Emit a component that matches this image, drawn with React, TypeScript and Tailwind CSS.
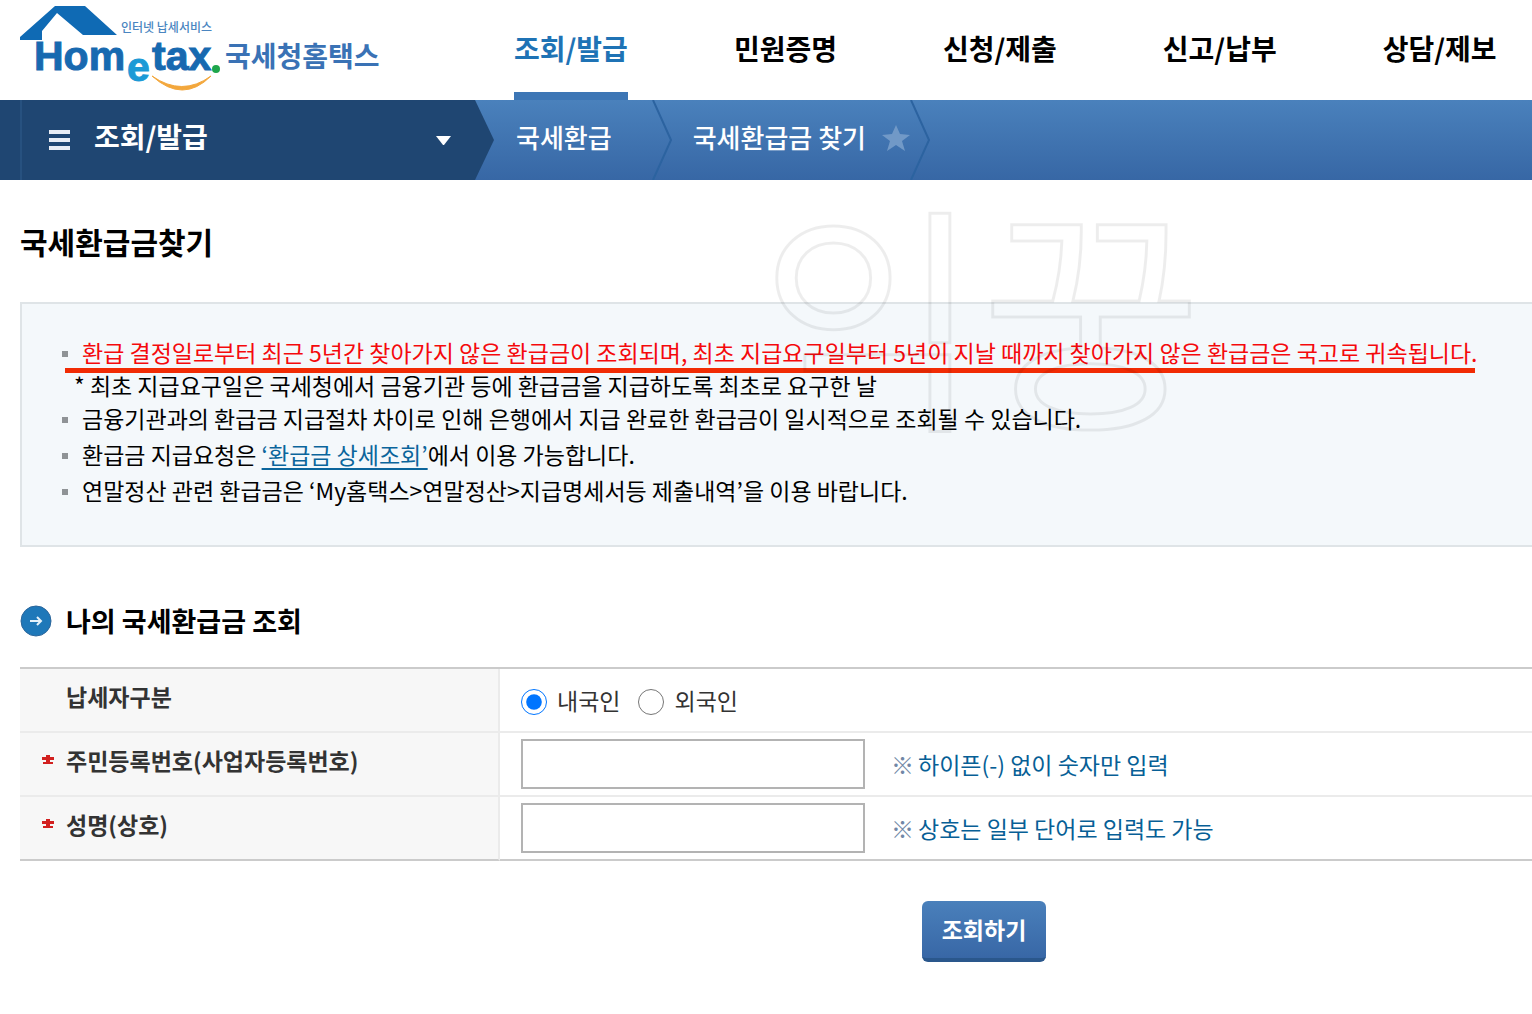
import { useState } from "react"

const MENUS = ["조회/발급", "민원증명", "신청/제출", "신고/납부", "상담/제보"]

const Logo = () => (
  <svg width="360" height="94" viewBox="20 0 360 94" role="img" aria-label="Hometax 국세청홈택스">
    <path d="M55 6H85L117 35H83L57 13L42 31V40H20V37Z" fill="#0f6ab4" />
    <g fontFamily="'Liberation Sans', sans-serif" fontWeight="700" fontSize="41" fill="#1769b0" stroke="#1769b0">
      <text x="34" y="70">Hom</text>
      <text x="152" y="70">tax</text>
      <text x="127" y="81" fill="#1b9ad6" stroke="#1b9ad6">e</text>
    </g>
    <circle cx="216" cy="69" r="4" fill="#1ea64b" />
    <path d="M152 76Q182 97 211 76Q183 104 152 76Z" fill="#f3a73c" stroke="#f3a73c" />
    <g fontFamily="'Noto Sans CJK KR', sans-serif">
      <text x="121" y="32" fontSize="12" fontWeight="500" fill="#4a85c0">인터넷 납세서비스</text>
      <text x="225" y="67" fontSize="28" fontWeight="700" fill="#3a72b5">국세청홈택스</text>
    </g>
  </svg>
)

const Chevron = () => (
  <svg className="shrink-0" width="20" height="80" viewBox="0 0 20 80" fill="none" aria-hidden="true">
    <path d="M1 0L19 40L1 80" stroke="#2c63a0" strokeWidth="2" />
  </svg>
)

const RequiredMark = () => (
  <svg width="12" height="10" viewBox="0 0 12 10" role="img" aria-label="필수">
    <path d="M4 0H8V2H12V5H8V7H11V9H1V7H4V5H0V2H4Z" fill="#d2201f" />
  </svg>
)

const Header = () => (
  <header className="flex h-[100px] pl-5">
    <a href="#" className="w-[494px] shrink-0">
      <Logo />
    </a>
    <nav className="flex gap-[106px] whitespace-nowrap text-[28px] font-bold">
      {MENUS.map((menu, i) => (
        <a
          key={menu}
          href="#"
          className={
            i === 0
              ? "border-b-8 border-[#3d76b5] pt-7 leading-10 text-[#1f73b5]"
              : "pt-7 leading-10 text-black"
          }
        >
          {menu}
        </a>
      ))}
    </nav>
  </header>
)

const Breadcrumb = () => (
  <div className="flex h-20 whitespace-nowrap bg-linear-to-b from-[#4a81bc] to-[#3767a5] text-[26px] font-medium text-white">
    <div className="flex w-[475px] shrink-0 bg-[#1f4672] pl-5">
      <button type="button" className="flex grow items-center border-l-2 border-[#27517f] pr-6 pl-[27px]">
        <svg width="21" height="20" viewBox="0 0 21 20" fill="#e8edf5" aria-hidden="true">
          <path d="M0 0H21V4H0ZM0 8H21V12H0ZM0 16H21V20H0Z" />
        </svg>
        <span className="grow pb-2 pl-6 text-left text-[28px] font-bold">조회/발급</span>
        <svg width="15" height="9" viewBox="0 0 15 9" fill="#fff" aria-hidden="true">
          <path d="M0 0H15L8 9H7Z" />
        </svg>
      </button>
    </div>
    <svg className="shrink-0" width="20" height="80" viewBox="0 0 20 80" aria-hidden="true">
      <path d="M0 0L19 40L0 80Z" fill="#1f4672" />
    </svg>
    <a href="#" className="flex items-center pb-2 pl-[21px]">국세환급</a>
    <div className="w-10 shrink-0" />
    <Chevron />
    <a href="#" className="flex items-center pb-2 pl-[21px]">국세환급금 찾기</a>
    <button type="button" aria-label="즐겨찾기" className="pb-1 pl-4">
      <svg width="28" height="26" viewBox="0 0 28 26" fill="#7199c7" aria-hidden="true">
        <path d="M14 0L18 9L28 10L20 16L23 26L14 20L5 26L8 16L0 10L10 9Z" />
      </svg>
    </button>
    <Chevron />
  </div>
)

const bullet =
  "flex items-center gap-[14px] before:mt-1 before:size-[6px] before:shrink-0 before:bg-[#8f9396] before:content-['']"

const Notice = () => (
  <section className="border-2 border-r-0 border-[#dfe4e7] bg-[#f4f8fb] pt-[30px] pb-[37px] pl-10 whitespace-nowrap">
    <ul className="text-[23px] leading-9 text-black">
      <li>
        <p className="relative w-fit text-[#f5090c]">
          <span className={bullet}>
            환급 결정일로부터 최근 5년간 찾아가지 않은 환급금이 조회되며, 최초 지급요구일부터 5년이 지날 때까지 찾아가지 않은
            환급금은 국고로 귀속됩니다.
          </span>
          <span className="absolute inset-x-[3px] -bottom-[3px] h-[5px] bg-[#f12b04]" />
        </p>
        <p className="pl-3 leading-[30px]">* 최초 지급요구일은 국세청에서 금융기관 등에 환급금을 지급하도록 최초로 요구한 날</p>
      </li>
      <li className={bullet}>금융기관과의 환급금 지급절차 차이로 인해 은행에서 지급 완료한 환급금이 일시적으로 조회될 수 있습니다.</li>
      <li className={bullet}>
        <span>
          환급금 지급요청은{" "}
          <a href="#" className="text-[#0b659c] underline decoration-2 underline-offset-4">
            ‘환급금 상세조회’
          </a>
          에서 이용 가능합니다.
        </span>
      </li>
      <li className={bullet}>연말정산 관련 환급금은 ‘My홈택스&gt;연말정산&gt;지급명세서등 제출내역’을 이용 바랍니다.</li>
    </ul>
  </section>
)

const labelCell = "w-[480px] border-r-2 border-b-2 border-[#ebebeb] bg-[#f7f7f7] p-0 pb-2 text-left font-bold"
const lastLabelCell =
  "w-[480px] border-r-2 border-b-2 border-r-[#ebebeb] border-b-[#cbcbcb] bg-[#f7f7f7] p-0 pb-2 text-left font-bold"
const input = "h-[50px] w-[344px] border-2 border-[#b3b3b3] bg-white px-3 outline-none focus:border-[#3d76b5]"
const radio = "mt-1 size-[26px]"

const Hint = ({ text }: { text: string }) => (
  <span className="flex gap-1 text-[#075f96]">
    <span className="text-[#7187a6]">※</span>
    {text}
  </span>
)

const SearchForm = () => {
  const [kind, setKind] = useState("domestic")
  const [regNo, setRegNo] = useState("")
  const [name, setName] = useState("")

  return (
    <form onSubmit={(e) => e.preventDefault()}>
      <table className="w-full border-separate border-spacing-0 border-t-2 border-[#cbcbcb] text-[23px] leading-8 whitespace-nowrap text-[#333]">
        <tbody>
          <tr className="h-16">
            <th scope="row" className={labelCell}>
              <span className="pl-[46px]">납세자구분</span>
            </th>
            <td className="border-b-2 border-[#ebebeb] p-0 pl-[21px]">
              <div className="flex gap-[18px]">
                <label className="flex items-center gap-[10px]">
                  <input
                    type="radio"
                    name="kind"
                    className={radio}
                    checked={kind === "domestic"}
                    onChange={() => setKind("domestic")}
                  />
                  내국인
                </label>
                <label className="flex items-center gap-[10px]">
                  <input
                    type="radio"
                    name="kind"
                    className={radio}
                    checked={kind === "foreign"}
                    onChange={() => setKind("foreign")}
                  />
                  외국인
                </label>
              </div>
            </td>
          </tr>
          <tr className="h-16">
            <th scope="row" className={labelCell}>
              <label htmlFor="regNo" className="flex items-center gap-3 pl-[22px]">
                <RequiredMark />
                주민등록번호(사업자등록번호)
              </label>
            </th>
            <td className="border-b-2 border-[#ebebeb] p-0 pl-[21px]">
              <div className="flex items-center gap-[26px]">
                <input id="regNo" type="text" className={input} value={regNo} onChange={(e) => setRegNo(e.target.value)} />
                <Hint text="하이픈(-) 없이 숫자만 입력" />
              </div>
            </td>
          </tr>
          <tr className="h-16">
            <th scope="row" className={lastLabelCell}>
              <label htmlFor="name" className="flex items-center gap-3 pl-[22px]">
                <RequiredMark />
                성명(상호)
              </label>
            </th>
            <td className="border-b-2 border-[#cbcbcb] p-0 pl-[21px]">
              <div className="flex items-center gap-[26px]">
                <input id="name" type="text" className={input} value={name} onChange={(e) => setName(e.target.value)} />
                <Hint text="상호는 일부 단어로 입력도 가능" />
              </div>
            </td>
          </tr>
        </tbody>
      </table>
      <div className="flex justify-center pt-10 pb-[52px] pl-[416px]">
        <button
          type="submit"
          className="h-[61px] w-[124px] rounded-md border-b-4 border-[#2a578c] bg-linear-to-b from-[#4a80bb] to-[#3867a6] text-[23px] font-bold text-white"
        >
          조회하기
        </button>
      </div>
    </form>
  )
}

const App = () => (
  <div className="relative overflow-x-hidden bg-white font-['Noto_Sans_CJK_KR',sans-serif] text-black">
    <Header />
    <Breadcrumb />
    <main className="pl-5">
      <h1 className="pt-[39px] pb-[39px] text-[30px] leading-[44px] font-bold">국세환급금찾기</h1>
      <Notice />
      <h2 className="flex items-center gap-[14px] pt-[54px] pb-[26px] text-[27px] leading-10 font-bold">
        <svg width="32" height="32" viewBox="0 0 32 32" aria-hidden="true">
          <circle cx="16" cy="16" r="15" fill="#1e78b9" stroke="#2c669b" />
          <path d="M10 16H21M17 12L21 16L17 20" fill="none" stroke="#e4f1fa" strokeWidth="2" />
        </svg>
        나의 국세환급금 조회
      </h2>
      <SearchForm />
    </main>
    <div
      aria-hidden="true"
      className="pointer-events-none absolute top-[188px] left-[760px] text-[240px] leading-[240px] font-normal whitespace-nowrap text-transparent select-none [-webkit-text-stroke:3px_#00000012]"
    >
      익꿍
    </div>
  </div>
)

export default App
